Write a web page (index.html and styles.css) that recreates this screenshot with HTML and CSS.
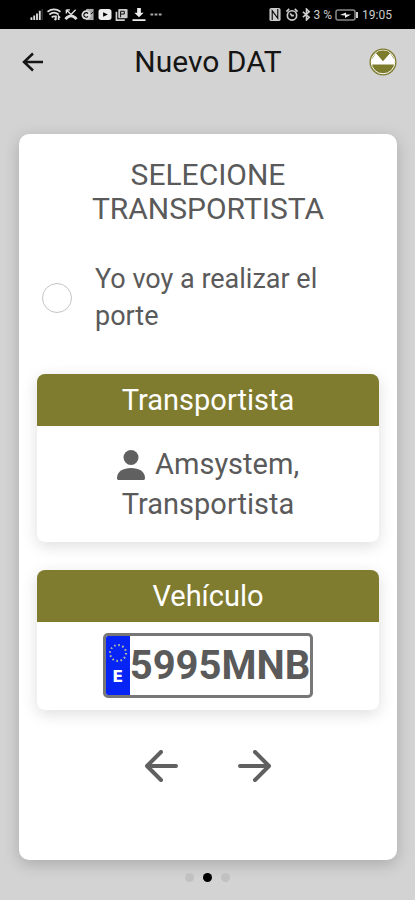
FILE: index.html
```
<!DOCTYPE html>
<html lang="es">
<head>
  <meta charset="UTF-8">
  <meta name="viewport" content="width=device-width, initial-scale=1">
  <title>Nuevo DAT</title>
  <link rel="stylesheet" href="styles.css">
</head>
<body>
  <div class="status-bar">
    <div class="status-group">
      <svg class="status-icon" viewBox="0 0 14 14"><path d="M0 13v-3h2v3zM3 13V8h2v5zM6 13V6h2v7zM9 13V3h2v10z" fill="#ddd"/><path d="M12 13V1h1v12z" fill="#555"/></svg>
      <svg class="status-icon" viewBox="0 0 14 14" fill="none" stroke="#ddd" stroke-width="1.800"><path d="M0 4q7-5 14 0M2 7q5-4 10 0M4.500 10q2.500-2 5 0"/><path d="M9 8v5M7.500 11.500 9 13M12 13V9l1.500 1.500"/></svg>
      <svg class="status-icon" viewBox="0 0 14 14" fill="none" stroke="#ddd"><path d="M2 2l5 5 5-5M2 2h4M2 2v4" stroke-width="1.500"/><path d="M1 12q6-7 12 0" stroke-width="3"/></svg>
      <svg class="status-icon" viewBox="0 0 14 14"><path d="M5 1h8v12H5z" fill="#aaa"/><path d="M6 4l3.500 3L13 4" fill="none" stroke="#000"/><circle cx="5" cy="7.500" r="5" fill="#ddd"/><path d="M7 6a2.500 2.500 0 1 0 0 3" fill="none" stroke="#000" stroke-width="1.200"/></svg>
      <svg class="status-icon" viewBox="0 0 14 14"><rect x="0" y="1" width="14" height="12" rx="3" fill="#eee"/><path d="M5 4.500v5L10 7z" fill="#000"/></svg>
      <svg class="status-icon" viewBox="0 0 14 14"><path d="M1 4v9h9" fill="none" stroke="#ccc" stroke-width="1.800"/><rect x="3" y="1" width="10" height="10" rx="1" fill="#ccc"/><path d="M5.500 10V3.500H9.500V6.500H5.500" fill="none" stroke="#000"/></svg>
      <svg class="status-icon" viewBox="0 0 14 14" fill="#eee"><path d="M5 0h4v5h3l-5 5-5-5h3zM0 12h14v2H0z"/></svg>
      <svg class="status-icon" viewBox="0 0 14 14" fill="#aaa"><path d="M1 6h3v2H1zM5.500 6h3v2h-3zM10 6h3v2h-3z"/></svg>
    </div>
    <div class="status-group">
      <svg class="status-icon" viewBox="0 0 14 14"><rect x="1" y="0" width="12" height="14" rx="2" fill="#ccc"/><path d="M4 13V3l6 8V1" fill="none" stroke="#000" stroke-width="1.200"/></svg>
      <svg class="status-icon" viewBox="0 0 14 14" fill="none" stroke="#ccc" stroke-width="1.800"><circle cx="7" cy="8" r="5"/><path d="M5 6l2 2.500L9 8M1 4l3-3M13 4l-3-3"/></svg>
      <svg class="status-icon status-icon-narrow" viewBox="0 0 10 14" fill="none" stroke="#ccc" stroke-width="1.800"><path d="M1 4l7 6-3 3V1l3 3-7 6"/></svg>
      <span>3 %</span>
      <svg class="battery" viewBox="0 0 24 14"><rect x="1" y="2" width="19" height="10" rx="2" fill="none" stroke="#888" stroke-width="1.500"/><path d="M22 4v6" stroke="#ccc" stroke-width="2"/><path d="M5 7l6-2.500v2h5L10 10V7.500z" fill="#eee"/></svg>
      <span>19:05</span>
    </div>
  </div>

  <header class="toolbar">
    <button class="back" type="button" aria-label="Volver">
      <svg viewBox="0 0 22 20" fill="none" stroke="#151515" stroke-width="2.500"><path d="M21 10H2M11 1.500 2 10l9 8.500"/></svg>
    </button>
    <h1>Nuevo DAT</h1>
    <svg class="logo" viewBox="0 0 28 28">
      <circle cx="14" cy="14" r="13.500" fill="#7d7b2c"/>
      <circle cx="14" cy="14" r="11.800" fill="none" stroke="#fff"/>
      <path d="M2.500 16.500V12L7 5l7 8 7-8 4.500 7v4.500z" fill="#fff"/>
      <path d="M7 5a11.300 11.300 0 0 1 14 0l-7 8z" fill="#7d7b2c"/>
    </svg>
  </header>

  <main class="slide">
    <h2>SELECIONE TRANSPORTISTA</h2>

    <div class="option">
      <input type="radio" id="own-transport" name="transport">
      <label for="own-transport">Yo voy a realizar el porte</label>
    </div>

    <section class="card">
      <h3>Transportista</h3>
      <p class="carrier">
        <svg class="person" viewBox="0 0 28 30" fill="#606060"><circle cx="14" cy="7.500" r="7.500"/><path d="M0 28c0-6.500 6-10 14-10s14 3.500 14 10c0 1.500-.5 2-2 2H2c-1.500 0-2-.5-2-2z"/></svg>
        Amsystem, Transportista
      </p>
    </section>

    <section class="card">
      <h3>Vehículo</h3>
      <div class="vehicle">
        <div class="plate">
          <div class="plate-country">
            <svg viewBox="0 0 20 20"><circle cx="10" cy="10" r="8" fill="none" stroke="#b9c0a0" stroke-width="2" stroke-dasharray="1.600 2.588"/></svg>
            <span>E</span>
          </div>
          <span class="plate-number">5995MNB</span>
        </div>
      </div>
    </section>

    <div class="nav">
      <button type="button" aria-label="Anterior">
        <svg viewBox="0 0 34 32"><path d="M31 16H3M16 2 2 16l14 14"/></svg>
      </button>
      <button type="button" aria-label="Siguiente">
        <svg viewBox="0 0 34 32"><path d="M3 16h28M18 2l14 14-14 14"/></svg>
      </button>
    </div>
  </main>

  <div class="pager">
    <span class="dot"></span>
    <span class="dot active"></span>
    <span class="dot"></span>
  </div>
</body>
</html>
```
FILE: styles.css
```
* { box-sizing: border-box; }
body { display: flex; flex-direction: column; min-height: 100vh; margin: 0; background: #d3d3d3; color: #5a5a5a; font-family: Roboto, sans-serif; }
h1, h2, h3, p { margin: 0; font-weight: 400; }
button { padding: 0; border: 0; background: none; cursor: pointer; }
svg { display: block; }

.status-bar { display: flex; justify-content: space-between; align-items: center; height: 29px; padding: 0 23px 0 30px; background: #000; color: #ccc; font-size: 12px; }
.status-group { display: flex; align-items: center; gap: 3px; }
.status-icon { width: 14px; height: 13px; }
.status-icon-narrow { width: 9px; }
.battery { width: 24px; height: 14px; }

.toolbar { display: grid; grid-template-columns: 28px 1fr 28px; align-items: center; height: 65px; padding: 0 18px 0 19px; }
.toolbar h1 { color: #151515; font-size: 30px; line-height: 36px; text-align: center; }
.back svg { width: 22px; height: 20px; margin: 0 auto; }
.logo { width: 28px; height: 28px; }

.slide { flex: 1; margin: 40px 18px 0 19px; padding: 24px 18px; background: #fff; border-radius: 10px; box-shadow: 0 4px 16px #0003; }
.slide h2 { font-size: 30px; line-height: 34px; text-align: center; }

.option { display: flex; align-items: center; gap: 23px; margin: 35px 0 39px 5px; font-size: 27px; line-height: 37px; }
.option input { flex: none; appearance: none; width: 30px; height: 30px; margin: 0; border: 1px solid #c4c4c4; border-radius: 50%; }
.option input:checked { border: 8px solid #7f7b2f; }
.option label { max-width: 240px; }

.card { margin-bottom: 28px; border-radius: 8px; background: #fff; box-shadow: 0 4px 16px #0002; }
.card h3 { padding: 6px; border-radius: 8px 8px 0 0; background: #7f7b2f; color: #fff; font-size: 29px; line-height: 40px; text-align: center; }
.carrier { max-width: 260px; margin: 0 auto; padding: 18px 0; font-size: 29px; line-height: 40px; text-align: center; }
.person { display: inline-block; width: 28px; height: 30px; margin-right: 3px; vertical-align: -6px; }

.vehicle { display: flex; justify-content: center; padding: 11px 0 12px; }
.plate { display: flex; height: 65px; border: 3px solid #777; border-radius: 5px; overflow: hidden; }
.plate-country { display: flex; flex-direction: column; align-items: center; gap: 4px; width: 24px; padding-top: 7px; background: #0524f5; color: #fff; font-size: 16px; font-weight: 700; line-height: 20px; font-family: "DejaVu Sans", sans-serif; }
.plate-country svg { width: 20px; height: 20px; }
.plate-number { font-size: 40px; font-weight: 700; line-height: 59px; }

.nav { display: flex; justify-content: center; gap: 58px; padding: 12px 0; }
.nav svg { width: 34px; height: 32px; fill: none; stroke: #606060; stroke-width: 4; stroke-linecap: round; stroke-linejoin: round; }

.pager { display: flex; justify-content: center; align-items: center; gap: 9px; height: 40px; padding-bottom: 6px; }
.dot { width: 9px; height: 9px; border-radius: 50%; background: #c1c1c1; }
.dot.active { background: #000; }
```
